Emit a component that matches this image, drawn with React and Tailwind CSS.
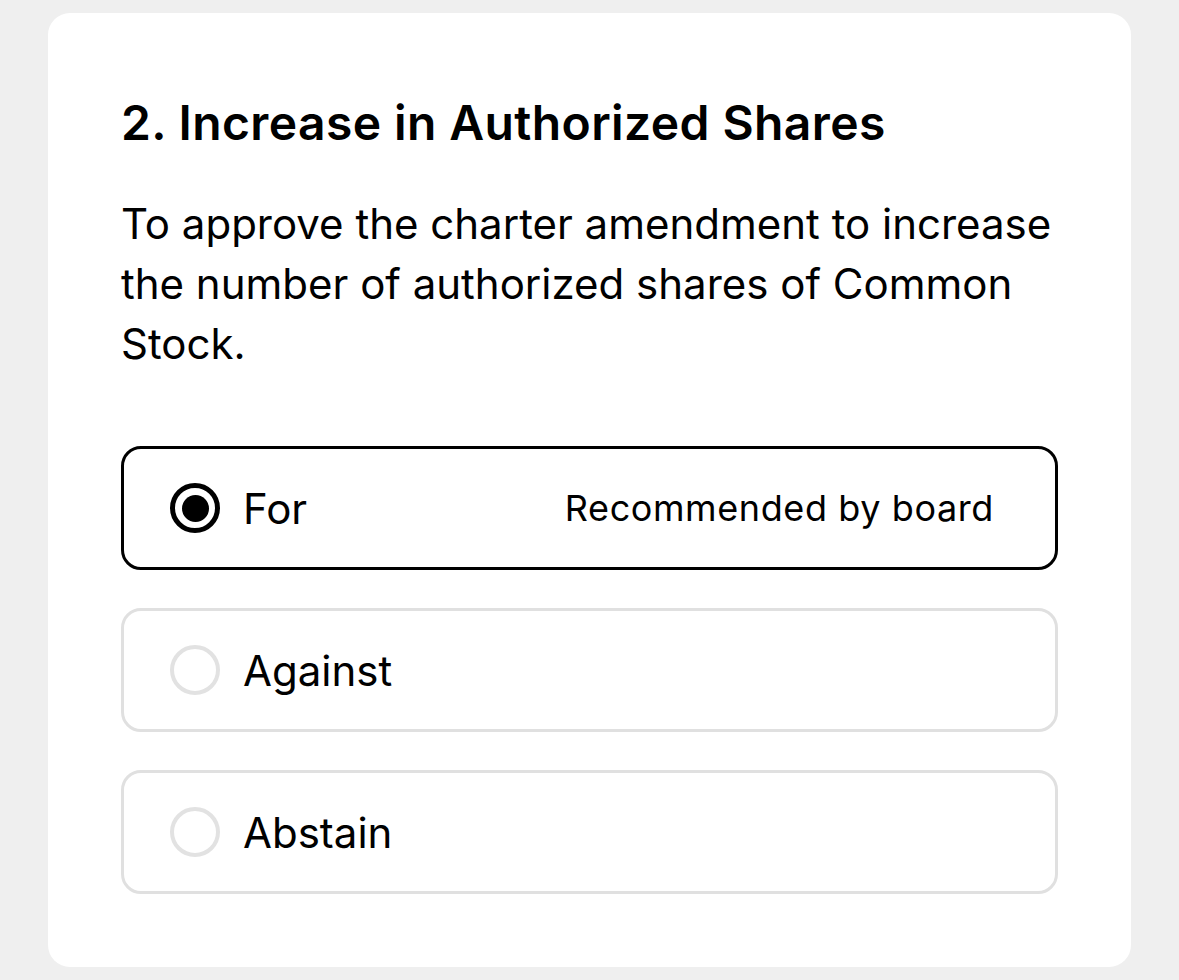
import React, { useState } from "react";

const options = [
  { id: "for", label: "For", note: "Recommended by board" },
  { id: "against", label: "Against" },
  { id: "abstain", label: "Abstain" },
];

export default function App() {
  const [selected, setSelected] = useState("for");

  return (
    <div
      className="min-h-screen bg-[#efefef] px-[48px] pt-[13px] pb-[13px]"
      style={{ fontFamily: "Inter, 'Noto Sans', sans-serif" }}
    >
      <div className="bg-white rounded-[22px] pl-[73px] pr-[73px] pt-[80px] pb-[73px]">
        <h2 className="text-[48px] leading-[60px] font-semibold text-black tracking-[0.4px]">
          2. Increase in Authorized Shares
        </h2>
        <p className="mt-[41px] text-[42px] leading-[60px] text-black">
          To approve the charter amendment to increase the number of authorized shares of Common Stock.
        </p>

        <div className="mt-[72px] flex flex-col gap-[38px]">
          {options.map((opt) => {
            const active = selected === opt.id;
            return (
              <button
                key={opt.id}
                onClick={() => setSelected(opt.id)}
                className={`h-[124px] w-full flex items-center pl-[46px] pr-[48px] rounded-[20px] border-[3px] text-left ${
                  active ? "border-black" : "border-[#e0e0e0]"
                }`}
              >
                <span
                  className={`w-[50px] h-[50px] rounded-full flex items-center justify-center shrink-0 ${
                    active ? "border-[5px] border-black" : "border-[4px] border-[#e2e2e2]"
                  }`}
                >
                  {active && <span className="w-[27px] h-[27px] rounded-full bg-black" />}
                </span>
                <span className="ml-[23px] text-[42px] text-black">{opt.label}</span>
                {opt.note && (
                  <span className="ml-auto mr-[13px] text-[36px] text-black tracking-[0.6px]">
                    {opt.note}
                  </span>
                )}
              </button>
            );
          })}
        </div>
      </div>
    </div>
  );
}
